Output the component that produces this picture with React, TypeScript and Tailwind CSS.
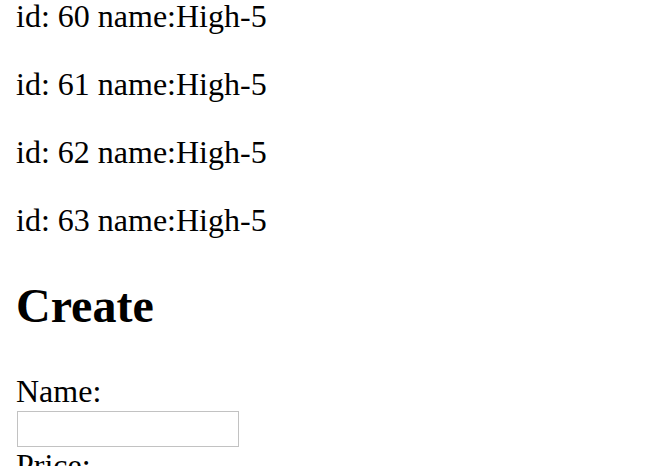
import React from "react";

const items = [60, 61, 62, 63];

export default function App() {
  return (
    <div className="h-[466px] overflow-hidden bg-white px-4 font-['Liberation_Serif',serif] text-black">
      <div>
        {items.map((id) => (
          <p key={id} className="mb-[36px] text-[32px] leading-[32px]">
            id: {id} name:High-5
          </p>
        ))}
      </div>
      <h2 className="mt-[42px] mb-[40px] text-[48px] font-bold leading-[55px]">
        Create
      </h2>
      <form>
        <div className="text-[32px] leading-[37px]">
          <label htmlFor="name">Name:</label>
          <br />
          <input
            id="name"
            type="text"
            className="mt-px ml-px block h-[36px] w-[222px] border border-[#c2c2c2] bg-white px-1 text-[26px]"
          />
        </div>
        <div className="text-[32px] leading-[37px]">
          <label htmlFor="price">Price:</label>
          <br />
          <input
            id="price"
            type="text"
            className="mt-px ml-px block h-[36px] w-[222px] border border-[#c2c2c2] bg-white px-1 text-[26px]"
          />
        </div>
      </form>
    </div>
  );
}
